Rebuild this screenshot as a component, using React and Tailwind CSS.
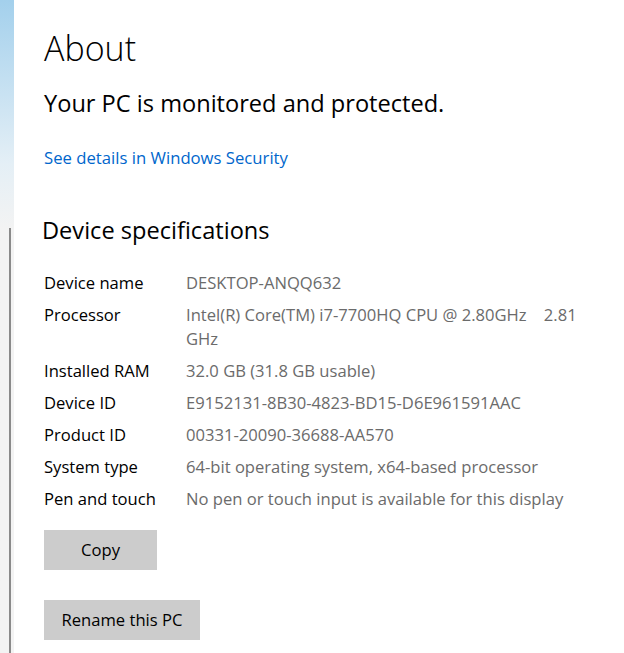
export default function App() {
  const specs = [
    ['Device name', 'DESKTOP-ANQQ632'],
    ['Processor', 'Intel(R) Core(TM) i7-7700HQ CPU @ 2.80GHz\u00a0\u00a0\u00a0 2.81\nGHz'],
    ['Installed RAM', '32.0 GB (31.8 GB usable)'],
    ['Device ID', 'E9152131-8B30-4823-BD15-D6E961591AAC'],
    ['Product ID', '00331-20090-36688-AA570'],
    ['System type', '64-bit operating system, x64-based processor'],
    ['Pen and touch', 'No pen or touch input is available for this display'],
  ]

  return (
    <div className="flex h-[653px] w-[624px] overflow-hidden bg-white font-['Open_Sans',sans-serif]">
      {/* left edge: wallpaper strip + scrollbar */}
      <div className="relative w-[14px] shrink-0 bg-gradient-to-b from-[#a3d0ec] via-[#e4eff6] via-[25%] to-[#f3f3f3] to-[35%]">
        <div className="absolute left-[9px] top-[228px] bottom-0 w-[2px] bg-[#8a8a8a]" />
      </div>

      <div className="flex-1 pl-[30px] pt-[26px]">
        <h1 className="text-[34px] leading-[44px] font-light text-black">About</h1>

        <p className="mt-[17px] text-[23.6px] leading-[32px] text-black">Your PC is monitored and protected.</p>

        <a className="mt-[28px] block text-[16.7px] leading-[22px] text-[#0066cc]">See details in Windows Security</a>

        <h2 className="-ml-[2px] mt-[45px] text-[23.6px] leading-[32px] text-black">Device specifications</h2>

        <div className="mt-[25px] flex flex-col gap-[8px] text-[16.6px] leading-[24px]">
          {specs.map(([k, v]) => (
            <div key={k} className="flex">
              <div className="w-[142px] shrink-0 text-black">{k}</div>
              <div className="whitespace-pre-line text-[#6b6b6b]">{v}</div>
            </div>
          ))}
        </div>

        <button className="mt-[19px] block h-[40px] w-[113px] bg-[#cccccc] text-[16.6px] text-black">Copy</button>
        <button className="mt-[30px] block h-[40px] w-[156px] bg-[#cccccc] text-[16.6px] text-black">Rename this PC</button>
      </div>
    </div>
  )
}
